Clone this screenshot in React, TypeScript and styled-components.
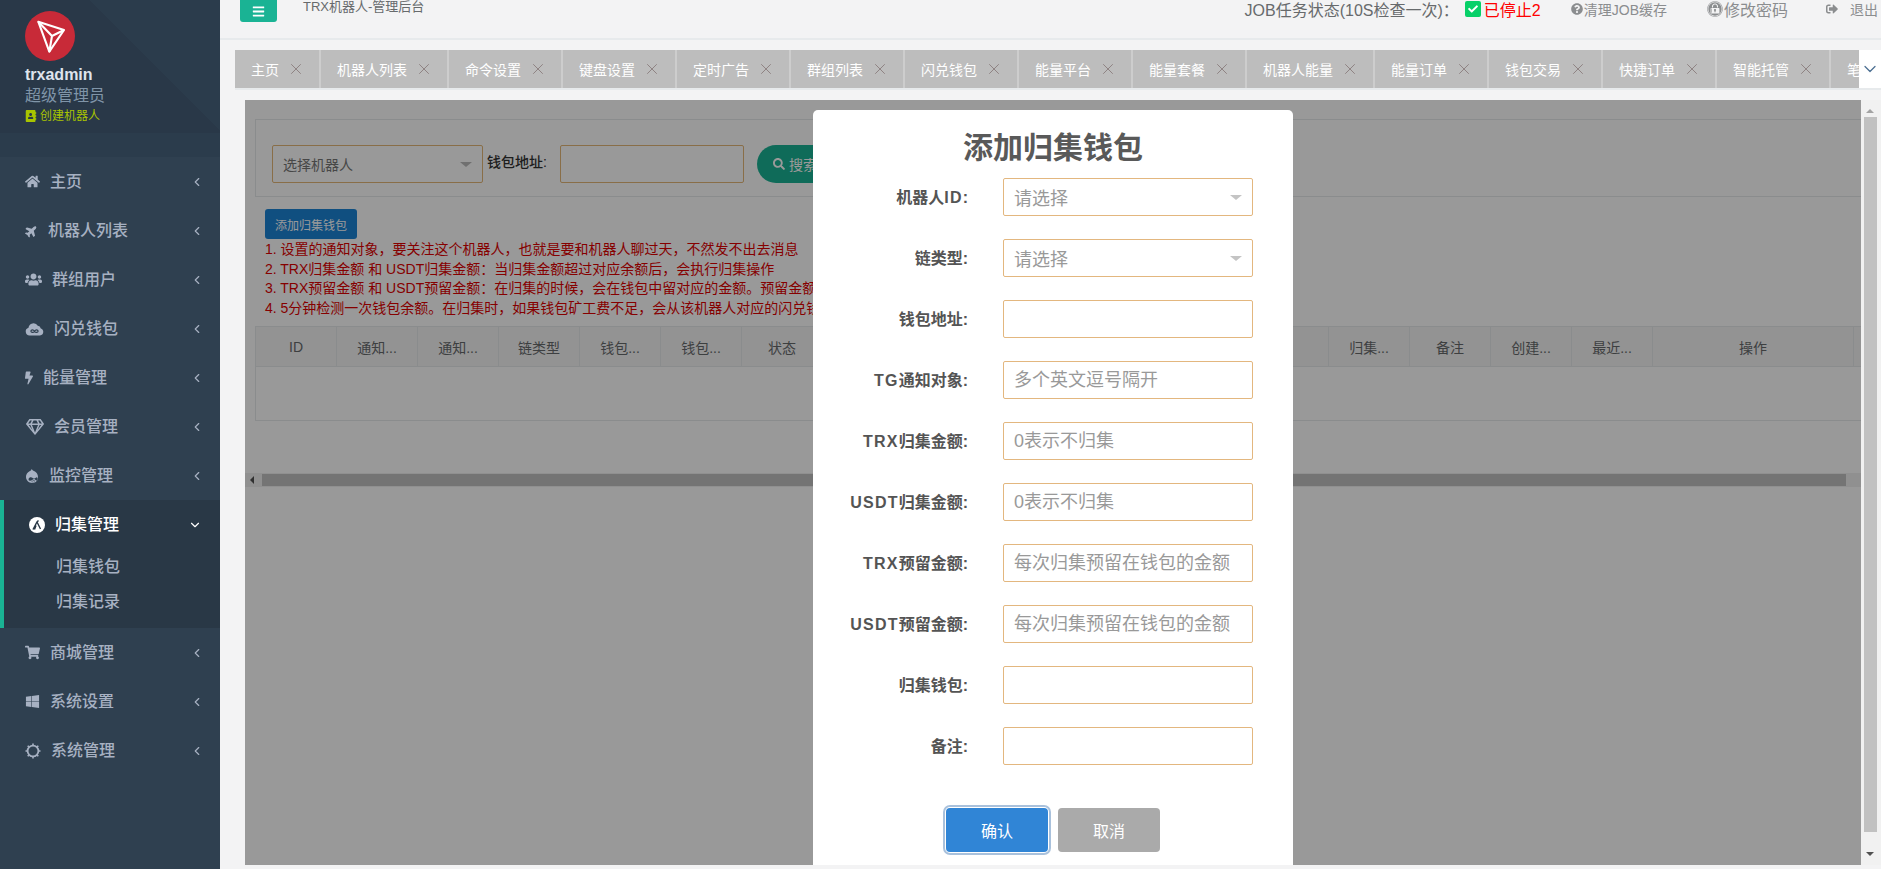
import React from 'react';
import styled, { createGlobalStyle } from 'styled-components';
import { ChevronDown, ChevronLeft, X } from 'lucide-react';
import {
  FaAddressBook,
  FaBars,
  FaBolt,
  FaCheck,
  FaDrupal,
  FaExpeditedssl,
  FaHome,
  FaPlane,
  FaQuestionCircle,
  FaRegGem,
  FaSearch,
  FaShoppingCart,
  FaSignOutAlt,
  FaUsers,
  FaWindows,
} from 'react-icons/fa';

const GlobalStyle = createGlobalStyle`
  html, body {
    margin: 0;
    padding: 0;
    height: 100%;
    overflow: hidden;
    background: #f3f3f4;
    font-family: "Liberation Sans", "Noto Sans CJK SC", sans-serif;
  }
  * {
    box-sizing: border-box;
  }
`;

const Page = styled.div`
  display: flex;
  width: 1881px;
  height: 869px;
  overflow: hidden;
`;

const Sidebar = styled.aside`
  width: 220px;
  flex-shrink: 0;
  background: #2f4050;
  color: #a7b1c2;
`;

const Profile = styled.div`
  height: 157px;
  padding: 11px 25px 0;
  background:
    linear-gradient(#0000 133px, #2b3c4c 133px),
    linear-gradient(45deg, #293848 174px, #2b3c4c 174px);
`;

const Avatar = styled.div`
  width: 50px;
  height: 50px;
  border-radius: 50%;
  background: #c82a38;
  display: flex;
`;

const UserName = styled.div`
  margin-top: 4px;
  font-size: 16px;
  line-height: 20px;
  font-weight: 700;
  color: #dfe4ed;
`;

const UserRole = styled.div`
  font-size: 16px;
  line-height: 22px;
  color: #8095a8;
`;

const CreateBot = styled.div`
  display: flex;
  align-items: center;
  gap: 3px;
  font-size: 12px;
  line-height: 18px;
  color: #a8c400;
`;

const NavItem = styled.div<{ $active?: boolean }>`
  height: 49px;
  padding: 0 ${p => (p.$active ? '18px' : '16px')} 0 25px;
  display: flex;
  align-items: center;
  font-size: 16px;
  font-weight: 500;
  color: ${p => (p.$active ? '#fff' : '#a7b1c2')};
`;

const NavIcon = styled.span<{ $width: number; $rotate?: number }>`
  width: ${p => p.$width}px;
  margin-right: 10px;
  display: flex;
  justify-content: center;
  flex-shrink: 0;
  transform: rotate(${p => p.$rotate || 0}deg);
`;

const NavLabel = styled.span`
  flex: 1;
  padding-bottom: 3px;
`;

const ActiveGroup = styled.div`
  border-left: 4px solid #1ab394;
  background: #293846;
  padding-bottom: 9px;
`;

const SubItem = styled.div`
  height: 35px;
  padding: 0 0 3px 52px;
  display: flex;
  align-items: center;
  font-size: 16px;
  font-weight: 500;
  color: #a7b1c2;
`;

const Main = styled.div`
  flex: 1;
  min-width: 0;
  display: flex;
  flex-direction: column;
`;

const TopBar = styled.header`
  height: 40px;
  flex-shrink: 0;
  padding-left: 20px;
  display: flex;
  align-items: flex-start;
  border-bottom: 2px solid #e7eaec;
  color: #676a6c;
`;

const MenuButton = styled.div`
  width: 37px;
  height: 22px;
  background: #1ab394;
  border-radius: 0 0 3px 3px;
  color: #fff;
  display: flex;
  align-items: center;
  justify-content: center;
  font-size: 13px;
`;

const Title = styled.div`
  margin-left: 26px;
  font-size: 13px;
  line-height: 14px;
`;

const TopRight = styled.div`
  margin-left: auto;
  display: flex;
  align-items: center;
  height: 18px;
  white-space: nowrap;
`;

const JobStatus = styled.span`
  font-size: 16px;
  color: #676a6c;
  margin-right: 6px;
`;

const CheckBox = styled.span`
  width: 16px;
  height: 16px;
  border-radius: 2px;
  background: #07d068;
  color: #fff;
  font-size: 10px;
  display: flex;
  align-items: center;
  justify-content: center;
  margin-right: 3px;
`;

const Stopped = styled.span`
  font-size: 16px;
  color: #f00;
  margin-right: 30px;
`;

const TopLink = styled.span<{ $size: number; $gap: number; $right: number }>`
  display: flex;
  align-items: center;
  gap: ${p => p.$gap}px;
  font-size: ${p => p.$size}px;
  color: #8b8d8f;
  margin-right: ${p => p.$right}px;
`;

const TabBar = styled.div`
  margin: 10px 0 0 15px;
  height: 40px;
  display: flex;
  flex-shrink: 0;
  border-bottom: 2px solid #e7eaec;
`;

const TabScroller = styled.div`
  flex: 1;
  min-width: 0;
  display: flex;
  overflow: hidden;
`;

const Tab = styled.div`
  flex-shrink: 0;
  padding: 0 14px 0 16px;
  display: flex;
  align-items: center;
  gap: 8px;
  background: #bdbdbd;
  border-right: 2px solid #cdcdcd;
  font-size: 14px;
  color: #fff;
  white-space: nowrap;
  svg {
    color: #8a7d7d;
  }
`;

const TabMore = styled.div`
  width: 22px;
  flex-shrink: 0;
  background: #fff;
  display: flex;
  align-items: center;
  justify-content: center;
  color: #4c6f92;
`;

const ContentRow = styled.div`
  margin: 10px 0 4px 25px;
  flex: 1;
  min-height: 0;
  display: flex;
`;

const Frame = styled.div`
  flex: 1;
  min-width: 0;
  position: relative;
  overflow: hidden;
  background: #fff;
  padding-top: 19px;
  font-size: 14px;
  color: #676a6c;
`;

const SearchPanel = styled.div`
  height: 78px;
  margin-left: 10px;
  padding: 25px 0 0 16px;
  border: 1px solid #e7eaec;
  border-right: 0;
  display: flex;
  align-items: flex-start;
`;

const BotSelect = styled.div`
  width: 211px;
  height: 38px;
  padding: 0 10px;
  border: 1px solid #e5b778;
  border-radius: 2px;
  display: flex;
  align-items: center;
  justify-content: space-between;
  font-size: 14px;
  color: #777;
`;

const Caret = styled.i<{ $size: number; $color: string }>`
  width: 0;
  height: 0;
  border-left: ${p => p.$size}px solid transparent;
  border-right: ${p => p.$size}px solid transparent;
  border-top: ${p => p.$size - 1}px solid ${p => p.$color};
`;

const AddressLabel = styled.label`
  width: 64px;
  margin: 6px 9px 0 4px;
  font-size: 14px;
  font-weight: 500;
  color: #333;
  white-space: nowrap;
`;

const AddressInput = styled.input`
  width: 184px;
  height: 38px;
  border: 1px solid #e5b778;
  border-radius: 2px;
  background: #fff;
`;

const SearchButton = styled.div`
  width: 110px;
  height: 38px;
  margin-left: 13px;
  border-radius: 19px;
  background: #1ab394;
  color: #fff;
  padding-left: 16px;
  display: flex;
  align-items: center;
  gap: 4px;
`;

const AddButton = styled.div`
  width: 92px;
  height: 30px;
  margin: 12px 0 0 20px;
  border-radius: 3px;
  background: #1c84d6;
  color: #fff;
  font-size: 12px;
  display: flex;
  align-items: center;
  justify-content: center;
`;

const Notes = styled.div`
  margin: 1px 0 8px 20px;
  font-size: 14px;
  line-height: 19.5px;
  color: #e00000;
  white-space: nowrap;
`;

const Table = styled.div`
  margin-left: 10px;
  border: 1px solid #e7eaec;
  border-right: 0;
  height: 95px;
`;

const TableHead = styled.div`
  height: 40px;
  display: flex;
  padding-right: 7px;
  background: #f5f5f5;
  border-bottom: 1px solid #e7eaec;
`;

const HeadCell = styled.div<{ $grow?: boolean; $width?: number }>`
  flex: ${p => (p.$grow ? 1 : `0 0 ${p.$width || 81}px`)};
  border-right: 1px solid #e7eaec;
  display: flex;
  align-items: center;
  justify-content: center;
`;

const HScroll = styled.div`
  margin-top: 52px;
  height: 14px;
  padding: 1px 15px 1px 17px;
  background: #f1f1f1;
  position: relative;
`;

const HThumb = styled.div`
  height: 12px;
  background: #c1c1c1;
`;

const ScrollArrowLeft = styled.i`
  position: absolute;
  left: 5px;
  top: 3px;
  border-top: 4px solid transparent;
  border-bottom: 4px solid transparent;
  border-right: 4px solid #505050;
`;

const VScroll = styled.div`
  width: 20px;
  flex-shrink: 0;
  background: #f1f1f1;
  padding: 9px 4px 0 2px;
  display: flex;
  flex-direction: column;
  align-items: center;
`;

const VThumb = styled.div`
  width: 13px;
  height: 715px;
  margin: 4px 0 20px;
  background: #c1c1c1;
`;

const ArrowUp = styled.i`
  border-left: 4px solid transparent;
  border-right: 4px solid transparent;
  border-bottom: 4px solid #a3a3a3;
`;

const ArrowDown = styled.i`
  border-left: 4px solid transparent;
  border-right: 4px solid transparent;
  border-top: 4px solid #505050;
`;

const Overlay = styled.div`
  position: absolute;
  inset: 0;
  background: rgba(0, 0, 0, 0.4);
`;

const Modal = styled.div`
  position: absolute;
  left: 568px;
  top: 10px;
  bottom: 0;
  width: 480px;
  background: #fff;
  border-radius: 5px 5px 0 0;
  padding-top: 18px;
`;

const ModalTitle = styled.h2`
  margin: 0 0 10px;
  height: 40px;
  font-size: 30px;
  line-height: 40px;
  font-weight: 700;
  color: #595959;
  text-align: center;
`;

const FormRow = styled.div`
  display: flex;
  align-items: center;
  height: 38px;
  margin-bottom: 23px;
`;

const FormLabel = styled.label`
  width: 155px;
  padding-bottom: 2px;
  text-align: right;
  font-size: 16px;
  font-weight: 700;
  color: #545454;
  margin-right: 35px;
  white-space: nowrap;
`;

const LabelLatin = styled.span`
  letter-spacing: 1.2px;
`;

const FormInput = styled.input`
  width: 250px;
  height: 38px;
  padding: 0 10px;
  border: 1px solid #e3b77f;
  border-radius: 2px;
  outline: 0;
  font-family: inherit;
  font-size: 18px;
  &::placeholder {
    color: #999;
  }
`;

const FormSelect = styled.div`
  width: 250px;
  height: 38px;
  padding: 0 10px;
  border: 1px solid #e3b77f;
  border-radius: 2px;
  display: flex;
  align-items: center;
  justify-content: space-between;
  font-size: 18px;
  color: #999;
`;

const ModalActions = styled.div`
  margin-top: 43px;
  display: flex;
  justify-content: center;
  gap: 10px;
`;

const ModalButton = styled.button<{ $primary?: boolean }>`
  width: 102px;
  height: 44px;
  border: 0;
  border-radius: 4px;
  color: #fff;
  font-family: inherit;
  font-size: 16px;
  background: ${p => (p.$primary ? '#3085d6' : '#aaa')};
  box-shadow: ${p => (p.$primary ? '0 0 0 1px #fff, 0 0 0 3px #a9c1dc' : 'none')};
`;

const CloudIcon = () => (
  <svg width="19" height="14" viewBox="0 0 19 14">
    <path d="M4.5 13.5A4 4 0 0 1 3.5 5.7 5 5 0 0 1 12.8 3.8 3.6 3.6 0 0 1 15.8 6.5 3.6 3.6 0 0 1 15 13.5Z" fill="currentColor" />
    <path d="M9.5 9.2C8.5 7.6 6 7.5 6 9.2s2.5 1.6 3.5 0 3.5-1.7 3.5 0-2.5 1.6-3.5 0z" fill="none" stroke="#2f4050" strokeWidth="1.2" />
  </svg>
);

const SunIcon = () => (
  <svg width="16" height="16" viewBox="0 0 16 16" fill="none" stroke="currentColor">
    <circle cx="8" cy="8" r="5.4" strokeWidth="1.8" />
    <path d="M8 .5v2M8 13.5v2M.5 8h2M13.5 8h2M2.7 2.7l1.4 1.4M11.9 11.9l1.4 1.4M2.7 13.3l1.4-1.4M11.9 4.1l1.4-1.4" strokeWidth="1.6" />
  </svg>
);

const TronLogo = () => (
  <svg width="50" height="50" viewBox="0 0 50 50" fill="none" stroke="#fff" strokeWidth="2.1" strokeLinejoin="round">
    <path d="M13.3 10.7 39 19 24.3 40.7Z" />
    <path d="M13.3 10.7 27 25 24.3 40.7M27 25 39 19" />
  </svg>
);

const CollectIcon = () => (
  <svg width="16" height="16" viewBox="0 0 16 16">
    <circle cx="8" cy="8" r="8" fill="#fff" />
    <path d="M4 12.5 8 5l1.5-1.5M8 5l3.5 7M7 8.5l-1.5 4" fill="none" stroke="#293846" strokeWidth="1.4" />
  </svg>
);

const menu: { label: string; icon: React.ReactNode; width: number; rotate?: number }[] = [
  { label: '主页', icon: <FaHome size={15} />, width: 15 },
  { label: '机器人列表', icon: <FaPlane size={14} />, width: 13, rotate: -45 },
  { label: '群组用户', icon: <FaUsers size={19} />, width: 17 },
  { label: '闪兑钱包', icon: <CloudIcon />, width: 19 },
  { label: '能量管理', icon: <FaBolt size={16} />, width: 8 },
  { label: '会员管理', icon: <FaRegGem size={18} />, width: 19 },
  { label: '监控管理', icon: <FaDrupal size={16} />, width: 14 },
];

const menuAfter: typeof menu = [
  { label: '商城管理', icon: <FaShoppingCart size={15} />, width: 15 },
  { label: '系统设置', icon: <FaWindows size={15} />, width: 15 },
  { label: '系统管理', icon: <SunIcon />, width: 16 },
];

const tabs = [
  '主页', '机器人列表', '命令设置', '键盘设置', '定时广告', '群组列表', '闪兑钱包', '能量平台',
  '能量套餐', '机器人能量', '能量订单', '钱包交易', '快捷订单', '智能托管', '笔数能量',
];

const notes = [
  '1. 设置的通知对象，要关注这个机器人，也就是要和机器人聊过天，不然发不出去消息',
  '2. TRX归集金额 和 USDT归集金额：当归集金额超过对应余额后，会执行归集操作',
  '3. TRX预留金额 和 USDT预留金额：在归集的时候，会在钱包中留对应的金额。预留金额不足时不归集',
  '4. 5分钟检测一次钱包余额。在归集时，如果钱包矿工费不足，会从该机器人对应的闪兑钱包转入',
];

const columns: { label: string; width?: number }[] = [
  { label: 'ID' },
  { label: '通知...' },
  { label: '通知...' },
  { label: '链类型' },
  { label: '钱包...' },
  { label: '钱包...' },
  { label: '状态' },
  { label: '', width: 84 },
  { label: '', width: 84 },
  { label: '', width: 84 },
  { label: '', width: 84 },
  { label: '', width: 84 },
  { label: '...', width: 86 },
  { label: '归集...' },
  { label: '备注' },
  { label: '创建...' },
  { label: '最近...' },
];

const fields: { latin?: string; label: string; placeholder?: string; select?: boolean }[] = [
  { label: '机器人', latin: 'ID', placeholder: '请选择', select: true },
  { label: '链类型', placeholder: '请选择', select: true },
  { label: '钱包地址' },
  { latin: 'TG', label: '通知对象', placeholder: '多个英文逗号隔开' },
  { latin: 'TRX', label: '归集金额', placeholder: '0表示不归集' },
  { latin: 'USDT', label: '归集金额', placeholder: '0表示不归集' },
  { latin: 'TRX', label: '预留金额', placeholder: '每次归集预留在钱包的金额' },
  { latin: 'USDT', label: '预留金额', placeholder: '每次归集预留在钱包的金额' },
  { label: '归集钱包' },
  { label: '备注' },
];

const renderItem = (item: typeof menu[number]) => (
  <NavItem key={item.label}>
    <NavIcon $width={item.width} $rotate={item.rotate}>{item.icon}</NavIcon>
    <NavLabel>{item.label}</NavLabel>
    <ChevronLeft size={14} />
  </NavItem>
);

export default function App() {
  return (
    <Page>
      <GlobalStyle />
      <Sidebar>
        <Profile>
          <Avatar><TronLogo /></Avatar>
          <UserName>trxadmin</UserName>
          <UserRole>超级管理员</UserRole>
          <CreateBot><FaAddressBook size={12} />创建机器人</CreateBot>
        </Profile>
        {menu.map(renderItem)}
        <ActiveGroup>
          <NavItem $active>
            <NavIcon $width={16}><CollectIcon /></NavIcon>
            <NavLabel>归集管理</NavLabel>
            <ChevronDown size={14} />
          </NavItem>
          <SubItem>归集钱包</SubItem>
          <SubItem>归集记录</SubItem>
        </ActiveGroup>
        {menuAfter.map(renderItem)}
      </Sidebar>

      <Main>
        <TopBar>
          <MenuButton><FaBars /></MenuButton>
          <Title>TRX机器人-管理后台</Title>
          <TopRight>
            <JobStatus>JOB任务状态(10S检查一次)：</JobStatus>
            <CheckBox><FaCheck /></CheckBox>
            <Stopped>已停止2</Stopped>
            <TopLink $size={14} $gap={1} $right={40}><FaQuestionCircle size={12} />清理JOB缓存</TopLink>
            <TopLink $size={16} $gap={1} $right={38}><FaExpeditedssl size={16} />修改密码</TopLink>
            <TopLink $size={14} $gap={12} $right={3}><FaSignOutAlt size={12} />退出</TopLink>
          </TopRight>
        </TopBar>

        <TabBar>
          <TabScroller>
            {tabs.map(tab => (
              <Tab key={tab}>{tab}<X size={18} strokeWidth={1.2} /></Tab>
            ))}
          </TabScroller>
          <TabMore><ChevronDown size={20} strokeWidth={1.5} /></TabMore>
        </TabBar>

        <ContentRow>
          <Frame>
            <SearchPanel>
              <BotSelect>选择机器人<Caret $size={6} $color="#bbb" /></BotSelect>
              <AddressLabel>钱包地址:</AddressLabel>
              <AddressInput />
              <SearchButton><FaSearch size={12} />搜索</SearchButton>
            </SearchPanel>
            <AddButton>添加归集钱包</AddButton>
            <Notes>
              {notes.map(note => <div key={note}>{note}</div>)}
            </Notes>
            <Table>
              <TableHead>
                {columns.map((col, i) => (
                  <HeadCell key={i} $width={col.width}>{col.label}</HeadCell>
                ))}
                <HeadCell $grow>操作</HeadCell>
              </TableHead>
            </Table>
            <HScroll>
              <ScrollArrowLeft />
              <HThumb />
            </HScroll>
            <Overlay />
            <Modal>
              <ModalTitle>添加归集钱包</ModalTitle>
              {fields.map(field => (
                <FormRow key={`${field.latin}${field.label}`}>
                  {field.label === '机器人' ? (
                    <FormLabel>{field.label}<LabelLatin>{field.latin}</LabelLatin>:</FormLabel>
                  ) : (
                    <FormLabel><LabelLatin>{field.latin}</LabelLatin>{field.label}:</FormLabel>
                  )}
                  {field.select ? (
                    <FormSelect>{field.placeholder}<Caret $size={6} $color="#c4c4c4" /></FormSelect>
                  ) : (
                    <FormInput placeholder={field.placeholder} />
                  )}
                </FormRow>
              ))}
              <ModalActions>
                <ModalButton $primary>确认</ModalButton>
                <ModalButton>取消</ModalButton>
              </ModalActions>
            </Modal>
          </Frame>
          <VScroll>
            <ArrowUp />
            <VThumb />
            <ArrowDown />
          </VScroll>
        </ContentRow>
      </Main>
    </Page>
  );
}
